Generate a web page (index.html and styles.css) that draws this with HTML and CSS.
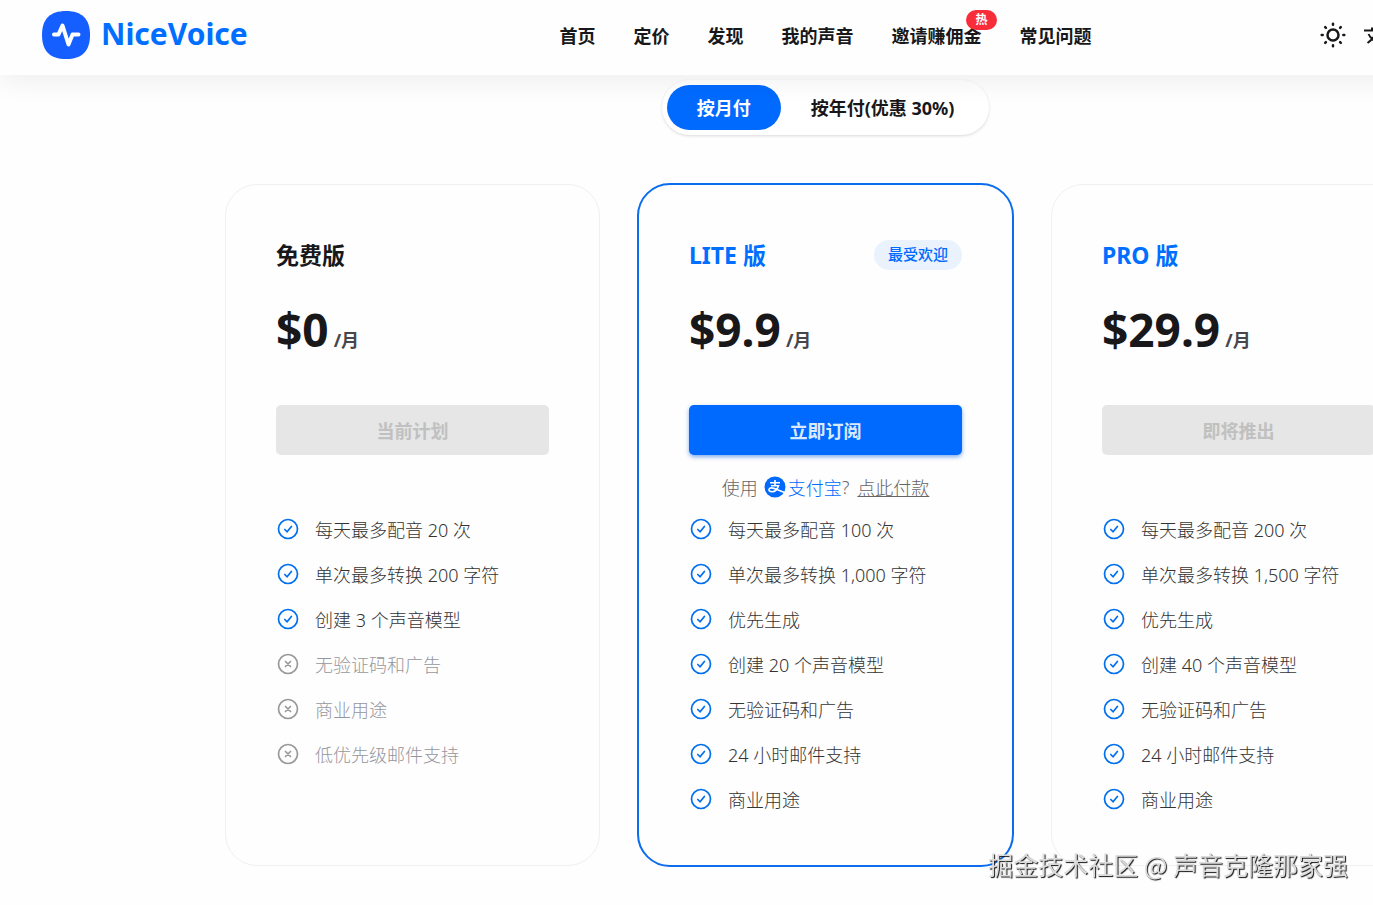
FILE: index.html
```html
<!DOCTYPE html>
<html lang="zh-CN">
<head>
    <meta charset="UTF-8">
    <meta name="viewport" content="width=device-width, initial-scale=1.0">
    <title>NiceVoice - 定价</title>
    <link rel="stylesheet" href="styles.css">
</head>
<body>
    <!-- iconos compartidos -->
    <svg class="sprite" aria-hidden="true">
        <symbol id="icon-check" viewBox="0 0 24 24">
            <circle cx="12" cy="12" r="9.5"/>
            <path d="M8.8 12.5l2.3 2.3 4.3-5.3"/>
        </symbol>
        <symbol id="icon-cross" viewBox="0 0 24 24">
            <circle cx="12" cy="12" r="9.5"/>
            <path d="M9.5 9.5l5 5M14.5 9.5l-5 5"/>
        </symbol>
    </svg>

    <div class="page">
        <header class="header">
            <a class="brand" href="#">
                <svg class="brand-logo" viewBox="0 0 48 48" aria-hidden="true">
                    <path fill="#155eff" d="M24 0C40 0 48 8 48 24S40 48 24 48 0 40 0 24 8 0 24 0z"/>
                    <path fill="none" stroke="#fff" stroke-width="4" stroke-linecap="round" stroke-linejoin="round" d="M12 23.500h4.500L20.500 14.500 26.500 33.500 30.500 23.500H36.500"/>
                </svg>
                <span>NiceVoice</span>
            </a>
            <nav class="nav">
                <a href="#">首页</a>
                <a href="#">定价</a>
                <a href="#">发现</a>
                <a href="#">我的声音</a>
                <a href="#">邀请赚佣金<span class="hot">热</span></a>
                <a href="#">常见问题</a>
            </nav>
            <div class="actions">
                <button class="icon-btn" type="button" aria-label="切换主题">
                    <svg viewBox="0 0 26 26">
                        <circle cx="13" cy="13" r="5.500"/>
                        <path d="M13 1.700v1M13 23.300v1M1.700 13h1M23.300 13h1M5.200 5.200l.7.700M20.100 20.100l.7.700M20.800 5.200l-.7.700M5.900 20.100l-.7.700"/>
                    </svg>
                </button>
                <button class="icon-btn" type="button" aria-label="切换语言">
                    <svg class="lang" viewBox="0 0 26 26">
                        <path d="M2 8.500h15M10 5.500v3M6.500 12c1.200 3 4 5.500 7 7.500M14.500 8.500c-1 5-4.500 9.500-9 12.500M14 22l5-12 5 12M16 18h6"/>
                    </svg>
                </button>
            </div>
        </header>

        <main class="main">
            <div class="toggle">
                <button class="toggle-btn active" type="button">按月付</button>
                <button class="toggle-btn" type="button">按年付(优惠 30%)</button>
            </div>

            <div class="plans">
                <section class="plan">
                    <div class="plan-head">
                        <h2>免费版</h2>
                    </div>
                    <p class="price">$0<span>/月</span></p>
                    <button class="plan-btn" type="button" disabled>当前计划</button>
                    <p class="pay"></p>
                    <ul class="features">
                        <li><svg><use href="#icon-check"/></svg>每天最多配音 20 次</li>
                        <li><svg><use href="#icon-check"/></svg>单次最多转换 200 字符</li>
                        <li><svg><use href="#icon-check"/></svg>创建 3 个声音模型</li>
                        <li class="off"><svg><use href="#icon-cross"/></svg>无验证码和广告</li>
                        <li class="off"><svg><use href="#icon-cross"/></svg>商业用途</li>
                        <li class="off"><svg><use href="#icon-cross"/></svg>低优先级邮件支持</li>
                    </ul>
                </section>

                <section class="plan featured">
                    <div class="plan-head">
                        <h2 class="blue">LITE 版</h2>
                        <span class="tag">最受欢迎</span>
                    </div>
                    <p class="price">$9.9<span>/月</span></p>
                    <button class="plan-btn primary" type="button">立即订阅</button>
                    <p class="pay">
                        <span>使用</span>
                        <span class="alipay">
                            <svg viewBox="0 0 22 22" aria-hidden="true">
                                <circle cx="11" cy="11" r="10.500" fill="#006aff"/>
                                <path fill="none" stroke="#fff" stroke-width="1.600" d="M6 6.800h10M11 4v5.500M7 9.700h7.500c-1 3.300-3.500 6-6.500 6-4 0-4-3.800-.5-3.800 3.200 0 7 2.800 14 4.800"/>
                            </svg>支付宝</span><span>?</span>
                        <a href="#">点此付款</a>
                    </p>
                    <ul class="features">
                        <li><svg><use href="#icon-check"/></svg>每天最多配音 100 次</li>
                        <li><svg><use href="#icon-check"/></svg>单次最多转换 1,000 字符</li>
                        <li><svg><use href="#icon-check"/></svg>优先生成</li>
                        <li><svg><use href="#icon-check"/></svg>创建 20 个声音模型</li>
                        <li><svg><use href="#icon-check"/></svg>无验证码和广告</li>
                        <li><svg><use href="#icon-check"/></svg>24 小时邮件支持</li>
                        <li><svg><use href="#icon-check"/></svg>商业用途</li>
                    </ul>
                </section>

                <section class="plan">
                    <div class="plan-head">
                        <h2 class="blue">PRO 版</h2>
                    </div>
                    <p class="price">$29.9<span>/月</span></p>
                    <button class="plan-btn" type="button" disabled>即将推出</button>
                    <p class="pay"></p>
                    <ul class="features">
                        <li><svg><use href="#icon-check"/></svg>每天最多配音 200 次</li>
                        <li><svg><use href="#icon-check"/></svg>单次最多转换 1,500 字符</li>
                        <li><svg><use href="#icon-check"/></svg>优先生成</li>
                        <li><svg><use href="#icon-check"/></svg>创建 40 个声音模型</li>
                        <li><svg><use href="#icon-check"/></svg>无验证码和广告</li>
                        <li><svg><use href="#icon-check"/></svg>24 小时邮件支持</li>
                        <li><svg><use href="#icon-check"/></svg>商业用途</li>
                    </ul>
                </section>
            </div>
        </main>
    </div>

    <div class="watermark">掘金技术社区 @ 声音克隆那家强</div>
</body>
</html>
```
FILE: styles.css
```css
* {
    box-sizing: border-box;
}
html {
    overflow: hidden;
}
body {
    margin: 0;
    font-family: "Noto Sans", "Noto Sans CJK SC", sans-serif;
    font-size: 18px;
    color: #18181b;
    background-color: #fefefe;
}
a {
    color: inherit;
    text-decoration: none;
}
button {
    border: none;
    padding: 0;
    font: inherit;
    color: inherit;
    background: none;
    cursor: pointer;
}
h2, p, ul {
    margin: 0;
    padding: 0;
}
.sprite {
    display: none;
}
.page {
    min-width: 1651px;
}

/* header */
.header {
    position: relative;
    z-index: 2;
    display: grid;
    grid-template-columns: 1fr auto 1fr;
    align-items: center;
    height: 75px;
    padding: 0 42px 5px;
    background-color: #fefefe;
    box-shadow: 0 8px 24px rgba(0, 0, 0, 0.06);
}
.brand {
    display: flex;
    align-items: center;
    gap: 11px;
    font-size: 30px;
    font-weight: 700;
    color: #006fff;
}
.brand span {
    padding-bottom: 4px;
}
.brand-logo {
    width: 48px;
    height: 48px;
}
.nav {
    display: flex;
    gap: 38px;
    font-weight: 700;
}
.nav a {
    position: relative;
}
.hot {
    position: absolute;
    top: -12px;
    right: -15px;
    padding: 0 9px;
    border-radius: 10px;
    font-size: 12px;
    line-height: 20px;
    color: #fff;
    background-color: #f72d3a;
}
.actions {
    display: flex;
    justify-self: end;
    gap: 16px;
    min-width: 289px;
}
.icon-btn svg {
    display: block;
    width: 26px;
    height: 26px;
    fill: none;
    stroke: #18181b;
    stroke-width: 2.5;
    stroke-linecap: round;
}
.icon-btn .lang {
    stroke-width: 2;
    stroke-linecap: butt;
}

/* pricing */
.main {
    display: flex;
    flex-direction: column;
    align-items: center;
    gap: 48px;
    padding: 5px 0 38px;
}
.toggle {
    display: flex;
    padding: 5px;
    border-radius: 28px;
    font-weight: 700;
    background-color: #fff;
    box-shadow: 0 1px 3px rgba(0, 0, 0, 0.15);
}
.toggle-btn {
    height: 45px;
    padding: 0 30px 2px;
    border-radius: 23px;
}
.toggle-btn.active {
    color: #fff;
    background-color: #006aff;
}
.plans {
    display: grid;
    grid-template-columns: repeat(3, 375px);
    gap: 38px;
    padding-top: 1px;
}
.plan {
    padding: 50px 50px 44px;
    border: 1px solid #f0f0f0;
    border-radius: 32px;
}
.plan.featured {
    margin: -1px;
    border: 2px solid #0b6cee;
    border-radius: 33px;
}
.plan-head {
    display: flex;
    justify-content: space-between;
    align-items: center;
    height: 40px;
}
.plan-head h2 {
    font-size: 23px;
    line-height: 38px;
}
.plan-head .blue {
    color: #006fff;
}
.tag {
    padding: 0 14px 2px;
    border-radius: 15px;
    font-size: 15px;
    font-weight: 500;
    line-height: 28px;
    color: #006aff;
    background-color: #e9f2fd;
}
.price {
    margin: 24px 0 46px;
    font-size: 46px;
    font-weight: 700;
    line-height: 60px;
}
.price span {
    margin-left: 5px;
    font-size: 18px;
    line-height: 20px;
    color: #46464d;
}
.plan-btn {
    display: block;
    width: 100%;
    height: 50px;
    border-radius: 5px;
    font-weight: 700;
    color: #c0c0c0;
    background-color: #e6e6e6;
}
.plan-btn.primary {
    color: #dbe9ff;
    background-color: #006aff;
    box-shadow: 0 2px 4px rgba(0, 90, 220, 0.5);
}
.pay {
    display: flex;
    justify-content: center;
    align-items: center;
    height: 51px;
    padding-top: 12px;
    font-weight: 300;
    color: #666;
}
.pay a {
    margin-left: 8px;
    text-decoration: underline;
}
.alipay {
    display: flex;
    align-items: center;
    gap: 2px;
    margin-left: 6px;
    color: #006aff;
}
.alipay svg {
    width: 22px;
    height: 22px;
}
.features {
    list-style: none;
    font-weight: 300;
    color: #333;
}
.features li {
    display: flex;
    align-items: center;
    gap: 15px;
    height: 45px;
}
.features svg {
    width: 24px;
    height: 24px;
    fill: none;
    stroke: #006fee;
    stroke-width: 1.7;
    stroke-linecap: round;
}
.features .off {
    color: #96969c;
}
.features .off svg {
    stroke: #999;
}

.watermark {
    position: fixed;
    right: 25px;
    bottom: 23px;
    z-index: 3;
    font-family: "Noto Sans CJK SC", sans-serif;
    font-size: 25px;
    line-height: 36px;
    color: #dcdcdc;
    text-shadow: 1px 1px 1px #111;
}
```
